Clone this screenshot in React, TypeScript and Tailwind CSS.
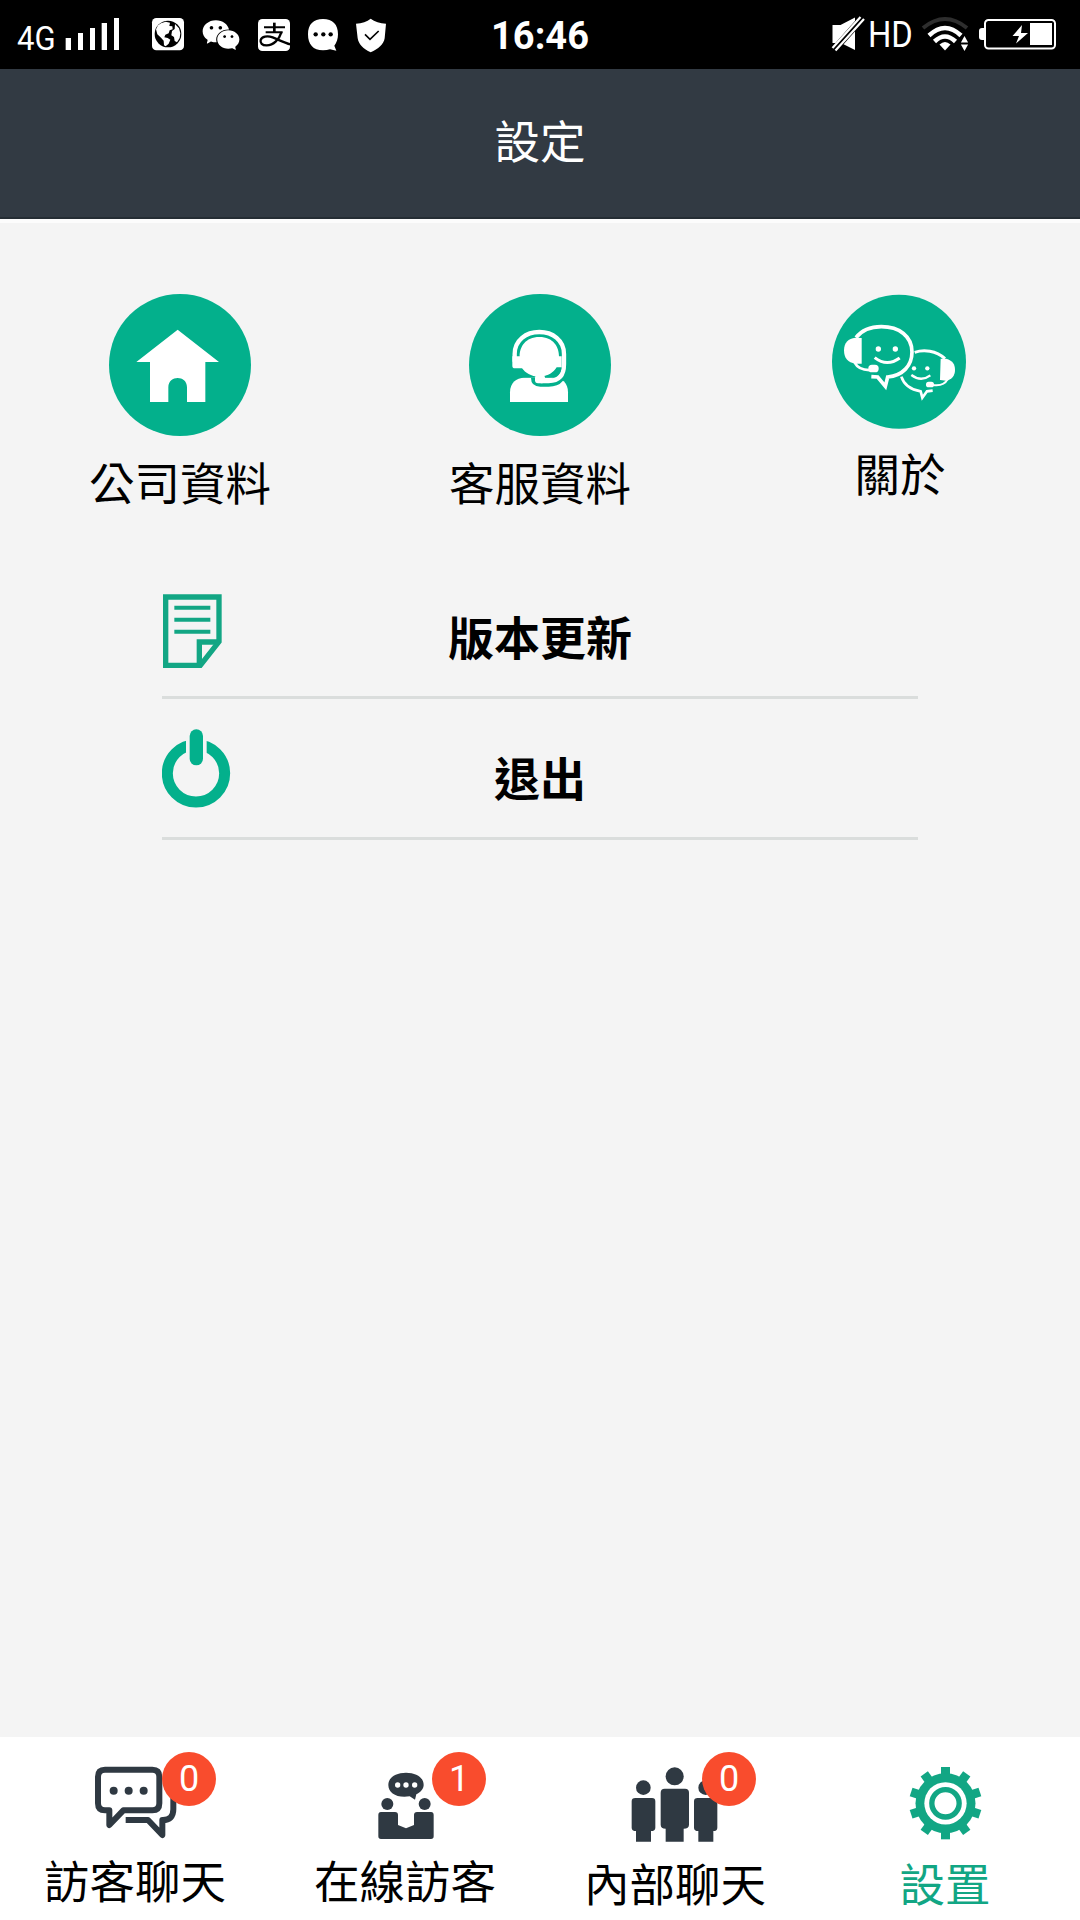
import type { ReactNode } from "react";
import { AiFillWechat } from "react-icons/ai";
import clsx from "clsx";

const GEAR_TEETH = [0, 36, 72, 108, 144, 180, 216, 252, 288, 324];

function StatusBar() {
  return (
    <div className="grid h-[69px] grid-cols-[1fr_auto_1fr] bg-black font-['Roboto',sans-serif] text-white">
      <div className="flex items-center">
        <span className="ml-[17px] w-[43px] origin-left scale-x-[0.94] pt-2 text-[33px] leading-none">
          4G
        </span>
        <svg className="h-[69px] w-[60px]" viewBox="180 0 180 207" fill="currentColor">
          <path d="M197 114h16v36h-16zM234 99h15v51h-15zM270 84h15v66h-15zM305 69h16v81h-16zM342 54h15v96h-15z" />
        </svg>
        <svg className="ml-[30px] h-[69px] w-9" viewBox="450 0 108 207">
          <rect x="456" y="54" width="96" height="97" rx="13" fill="white" />
          <circle cx="504" cy="102" r="40" fill="black" />
          <path
            d="M483 70l14-5 13 3-2 10 9 1 1 9-9 3-3 9-10 4-3 8 10 2 8 5-5 12-9 8-5-3-1-14-8-9-11-10-4-15 6-12zM525 72l12 13 4 15-2 14-8 13-7-4-2-12-8-5 2-13 8-6z"
            fill="white"
          />
        </svg>
        <AiFillWechat className="ml-[14px] h-[42px] w-[42px]" />
        <svg className="ml-[14px] h-[69px] w-9" viewBox="768 0 108 207" fill="none" stroke="black">
          <rect x="774" y="57" width="96" height="96" rx="13" fill="white" stroke="none" />
          <path d="M792 82H855M797 97H848" strokeWidth="6" />
          <path d="M823 68V97" strokeWidth="8" />
          <path
            d="M844 97C838 117 821 136 800 136C786 136 780 129 782 120C785 109 802 106 818 112C836 119 851 128 872 133"
            strokeWidth="7"
          />
        </svg>
        <svg className="ml-[14px] h-[69px] w-[34px]" viewBox="918 0 102 207">
          <path
            d="M969 57c29 0 45 16 45 46 0 14-4 25-11 34l6 15-19-4c-6 2-13 3-21 3-30 0-45-17-45-48 0-30 16-46 45-46z"
            fill="white"
          />
          <circle cx="947" cy="103" r="6.5" />
          <circle cx="970" cy="103" r="6.5" />
          <circle cx="992" cy="103" r="6.5" />
        </svg>
        <svg className="ml-[14px] h-[69px] w-[34px]" viewBox="1062 0 102 207">
          <path
            d="M1112 56c12 9 28 14 46 15l-4 44c-3 18-19 32-42 42-22-10-36-24-39-42l-5-44c18-1 33-6 44-15z"
            fill="white"
          />
          <path d="M1095 103l15 15 26-25" fill="none" stroke="black" strokeWidth="5" />
        </svg>
      </div>
      <span className="pt-[4px] text-[38px] leading-[64px] font-bold">16:46</span>
      <div className="flex items-center justify-end">
        <svg className="h-[69px] w-[36px]" viewBox="830 0 36 69">
          <path d="M832.5 25h8L855 17.5V50l-14-7h-8.500z" fill="white" />
          <path d="M833 51L864 16" stroke="black" strokeWidth="7" />
          <path d="M832.500 48L860.500 17M835.500 50.500L864 19" stroke="white" strokeWidth="2.200" />
        </svg>
        <span className="ml-[1px] w-[46px] origin-left scale-x-[0.91] pl-[1px] text-[36px] leading-[66px]">
          HD
        </span>
        <svg className="ml-[8px] h-[69px] w-[49px]" viewBox="921 0 49 69" fill="none">
          <path d="M923 28Q945 10 967 28" stroke="#2e2e2e" strokeWidth="4" />
          <path d="M929 35.500Q945 20.500 961 35.500" stroke="white" strokeWidth="4.500" />
          <path d="M934.500 41.500Q945 31.500 955.500 41.500" stroke="white" strokeWidth="4.500" />
          <path d="M939.500 44.500Q945 39.500 950.500 44.500L945 50.500z" fill="white" />
          <path d="M964.500 36l3.600 6.500h-7.200zM964.500 51l3.600-6.500h-7.200z" fill="white" />
        </svg>
        <svg className="mr-[22px] ml-[8px] h-[69px] w-[80px]" viewBox="978 0 80 69">
          <path d="M984 28h-2q-3 0-3 3v6q0 3 3 3h2z" fill="white" />
          <rect x="985" y="20" width="70" height="28.500" rx="3.500" fill="none" stroke="white" strokeWidth="2" />
          <path d="M1022 25l-9.500 11h6.500l-3 7.500L1028 33h-7z" fill="white" />
          <path d="M1030 23h22v22h-22z" fill="white" />
        </svg>
      </div>
    </div>
  );
}

function HouseIcon() {
  return (
    <svg className="size-[142px]" viewBox="87 42 426 426">
      <circle cx="300" cy="255" r="213" fill="#03b08c" />
      <path
        d="M293 149L417 246H376V366H321V322C321 285 265 285 265 322V366H210V246H169z"
        fill="white"
      />
    </svg>
  );
}

function AgentIcon() {
  return (
    <svg className="size-[142px]" viewBox="87 42 426 426">
      <circle cx="300" cy="255" r="213" fill="#03b08c" />
      <path d="M210 366V337C210 309 228 293 254 293H340C367 293 384 309 384 337V366z" fill="white" />
      <path
        d="M371 240V255Q371 309 326 309H301Q284 309 284 294"
        fill="none"
        stroke="#03b08c"
        strokeWidth="22"
      />
      <path d="M252 278Q298 308 347 274V292H252z" fill="#03b08c" />
      <path d="M298 171C340 171 357 201 357 229H365V262H350C340 278 323 290 298 290C272 290 256 278 246 265H225Q217 265 217 257V229H239C239 201 256 171 298 171z" fill="white" />
      <path
        d="M224 245V222C224 181 258 156 298 156C338 156 372 181 372 222V253Q372 303 326 303H302"
        fill="none"
        stroke="white"
        strokeWidth="13"
      />
      <path d="M310 290Q340 285 350 265H364Q362 292 326 292z" fill="#03b08c" />
      <rect x="285" y="285" width="30" height="25" rx="9" fill="white" />
    </svg>
  );
}

function AboutIcon() {
  return (
    <svg className="mt-px size-[134px] overflow-visible" viewBox="99 45 402 402" fill="none">
      <circle cx="297" cy="245" r="201" fill="#03b08c" />
      <g stroke="white" strokeWidth="11">
        <path d="M168 173C185 151 212 140 244 140C298 140 336 169 336 216C336 257 308 287 263 291L256 319L233 291L214 290" />
        <path d="M164 248C173 265 187 272 215 270" strokeWidth="8" />
        <path d="M224 233Q261 262 299 234" strokeWidth="9" />
      </g>
      <g stroke="white" strokeWidth="9">
        <path d="M344 217C371 208 408 211 435 236" />
        <path d="M304 290C312 315 330 329 362 334L367 353L381 334L398 332" strokeWidth="8" />
        <path d="M334 285Q363 307 391 286" strokeWidth="7" />
        <path d="M442 299C435 313 420 318 398 315" strokeWidth="6" />
      </g>
      <g fill="white">
        <path d="M185 174V251H166C144 248 132 235 132 211C132 188 145 175 166 173z" />
        <rect x="205" y="254" width="31" height="23" rx="11" />
        <circle cx="235" cy="207" r="8" />
        <circle cx="286" cy="207" r="8" />
        <path d="M422 236H439C457 241 465 252 465 269C465 287 456 298 439 302L420 300z" />
        <rect x="378" y="305" width="24" height="17" rx="8" />
        <circle cx="342" cy="265" r="6.500" />
        <circle cx="382" cy="265" r="6.500" />
      </g>
    </svg>
  );
}

function NoteIcon() {
  return (
    <svg className="ml-px h-[74px] w-[59px]" viewBox="38 43 177 222" fill="none" stroke="#12a684">
      <path d="M46 52H206V186L150 257H46z" strokeWidth="16" />
      <path d="M147 257V187H206" strokeWidth="16" />
      <path d="M72 84H180M72 120H180M72 156H180" strokeWidth="12" />
    </svg>
  );
}

function PowerIcon() {
  return (
    <svg className="h-[79px] w-[69px]" viewBox="36 446 207 237" fill="none" stroke="#03b08c">
      <circle cx="138" cy="579" r="86" strokeWidth="33" />
      <path d="M108 470H170V540H108z" fill="#f4f4f4" stroke="none" />
      <rect x="119" y="447" width="40" height="108" rx="20" fill="#03b08c" stroke="none" />
    </svg>
  );
}

function ChatIcon() {
  return (
    <svg className="h-[88px] w-24" viewBox="171 105 288 264" fill="none" stroke="#2f3942">
      <path
        d="M225 134H367Q388 134 388 155V235Q388 256 367 256H280L238 300V256H225Q204 256 204 235V155Q204 134 225 134z"
        strokeWidth="18"
        strokeLinejoin="round"
      />
      <path
        d="M287 285H354L397 330V285Q430 286 430 253V190"
        strokeWidth="18"
        strokeLinejoin="round"
      />
      <g fill="#2f3942" stroke="none">
        <circle cx="251" cy="197" r="12" />
        <circle cx="296" cy="197" r="12" />
        <circle cx="341" cy="197" r="12" />
      </g>
    </svg>
  );
}

function VisitorsIcon() {
  return (
    <svg className="h-[88px] w-24" viewBox="171 105 288 264" fill="#2f3942">
      <path d="M318 143C350 143 371 158 371 180C371 191 362 202 349 208L345 224L329 214C290 220 265 204 265 180C265 158 286 143 318 143z" />
      <circle cx="262" cy="237" r="18" />
      <circle cx="374" cy="237" r="18" />
      <path d="M243 261H285Q294 261 294 270V300L318 310L342 300V270Q342 261 351 261H393Q401 261 401 270V334Q401 342 393 342H243Q235 342 235 334V270Q235 261 243 261z" />
      <g fill="white">
        <circle cx="293" cy="180" r="8" />
        <circle cx="318" cy="180" r="8" />
        <circle cx="344" cy="180" r="8" />
      </g>
    </svg>
  );
}

function TeamIcon() {
  return (
    <svg className="h-[88px] w-24" viewBox="171 105 288 264" fill="#2f3942">
      <circle cx="220" cy="188" r="22" />
      <path d="M196 219H246Q256 219 256 229V308Q256 318 243 318V350H198V318Q185 318 185 308V229Q185 219 196 219z" />
      <circle cx="314" cy="154" r="27" />
      <path d="M284 191H345Q357 191 357 203V299Q357 311 341 311V350H287V311Q272 311 272 299V203Q272 191 284 191z" />
      <circle cx="407" cy="188" r="22" />
      <path d="M383 219H432Q442 219 442 229V308Q442 318 430 318V350H385V318Q372 318 372 308V229Q372 219 383 219z" />
    </svg>
  );
}

function GearIcon() {
  return (
    <svg className="h-[88px] w-24" viewBox="141 105 288 264" fill="#12a684">
      {GEAR_TEETH.map((angle) => (
        <path key={angle} d="M273 126H300V170H273z" transform={`rotate(${angle} 286.5 234.5)`} />
      ))}
      <circle cx="286.500" cy="235" r="90" />
      <circle cx="286.500" cy="235" r="63.500" fill="white" />
      <circle cx="286.500" cy="235" r="41" fill="none" stroke="#12a684" strokeWidth="16" />
    </svg>
  );
}

function Shortcut({ label, className, children }: { label: string; className?: string; children: ReactNode }) {
  return (
    <button className="flex flex-col items-center">
      {children}
      <span className={clsx("text-[45.5px] leading-[56px]", className)}>{label}</span>
    </button>
  );
}

function MenuRow({ label, icon }: { label: string; icon: ReactNode }) {
  return (
    <button className="grid h-[141px] grid-cols-[1fr_auto_1fr] items-center border-b-[3px] border-[#dadddc]">
      {icon}
      <span className="pt-[15px] text-[46px] leading-[56px] font-bold">{label}</span>
    </button>
  );
}

type TabProps = {
  label: string;
  icon: ReactNode;
  badge?: number;
  active?: boolean;
  labelClass: string;
};

function Tab({ label, icon, badge, active, labelClass }: TabProps) {
  return (
    <button className={clsx("relative flex flex-col items-center pt-[23px]", active && "text-[#12a684]")}>
      {icon}
      <span className={clsx("text-[45.5px] leading-[56px]", labelClass)}>{label}</span>
      {badge !== undefined && (
        <span className="absolute top-[15px] left-[162px] flex size-[54px] items-center justify-center rounded-full bg-[#f94c2d] font-['Roboto',sans-serif] text-[36px] leading-none text-white">
          {badge}
        </span>
      )}
    </button>
  );
}

export default function App() {
  return (
    <div className="flex h-[1920px] w-[1080px] flex-col overflow-hidden bg-[#f4f4f4] font-['Noto_Sans_CJK_TC',sans-serif] text-black">
      <StatusBar />
      <header className="flex h-[150px] items-center justify-center border-b-2 border-[#252d34] bg-[#323a43] pb-2">
        <h1 className="text-[45.5px] leading-[56px] text-white">設定</h1>
      </header>
      <div className="h-1 bg-[#fcfcfc]" />

      <main className="flex flex-1 flex-col">
        <div className="grid grid-cols-3 items-start pt-[71px]">
          <Shortcut label="公司資料" className="mt-[17px]">
            <HouseIcon />
          </Shortcut>
          <Shortcut label="客服資料" className="mt-[17px]">
            <AgentIcon />
          </Shortcut>
          <Shortcut label="關於" className="mt-[15px]">
            <AboutIcon />
          </Shortcut>
        </div>
        <div className="mx-[162px] mt-[49px] flex flex-col">
          <MenuRow label="版本更新" icon={<span className="pt-[7px]"><NoteIcon /></span>} />
          <MenuRow label="退出" icon={<PowerIcon />} />
        </div>
      </main>

      <nav className="grid h-[183px] grid-cols-4 items-start bg-white">
        <Tab label="訪客聊天" icon={<ChatIcon />} badge={0} labelClass="mt-[3px]" />
        <Tab label="在線訪客" icon={<VisitorsIcon />} badge={1} labelClass="mt-[3px]" />
        <Tab label="內部聊天" icon={<TeamIcon />} badge={0} labelClass="mt-[6px]" />
        <Tab label="設置" icon={<GearIcon />} active labelClass="mt-[6px]" />
      </nav>
    </div>
  );
}
